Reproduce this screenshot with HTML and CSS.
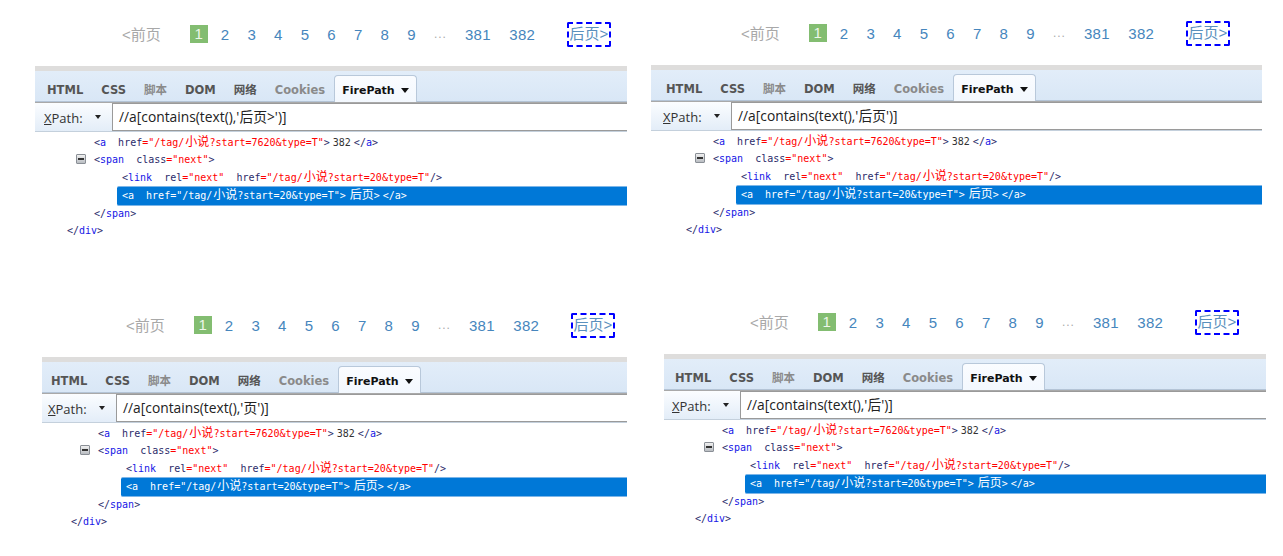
FILE: index.html
```html
<!DOCTYPE html>
<html lang="zh">
<head>
<meta charset="utf-8">
<title>FirePath XPath</title>
<link rel="stylesheet" href="styles.css">
</head>
<body>
<section class="shot shot-a">
  <nav class="pager"><span class="prev">&lt;前页</span><span class="cur">1</span><a>2</a><a>3</a><a>4</a><a>5</a><a>6</a><a>7</a><a>8</a><a>9</a><span class="dots">...</span><a class="big">381</a><a class="big">382</a><a class="next">后页&gt;</a></nav>
  <div class="grey"></div>
  <div class="tabs"><b>HTML</b><b>CSS</b><b class="off">脚本</b><b>DOM</b><b>网络</b><b class="off">Cookies</b><b class="tab">FirePath<i class="caret"></i></b></div>
  <div class="tools"><label><u>X</u>Path:</label><i class="drop"></i><div class="input">//a[contains(text(),'后页&gt;')]</div></div>
  <div class="code">
    <div class="row l1"><s>&lt;</s><em>a</em>  <s>href</s><q>="/tag/<span class="c">小说</span>?start=7620&amp;type=T"</q><s>&gt;</s><span class="t">382</span><s>&lt;/</s><em>a</em><s>&gt;</s></div>
    <div class="row l1"><i class="minus"></i><s>&lt;</s><em>span</em>  <s>class</s><q>="next"</q><s>&gt;</s></div>
    <div class="row l2"><s>&lt;</s><em>link</em>  <s>rel</s><q>="next"</q>  <s>href</s><q>="/tag/<span class="c">小说</span>?start=20&amp;type=T"</q><s>/&gt;</s></div>
    <div class="row l2 sel">&lt;a  href="/tag/<span class="c">小说</span>?start=20&amp;type=T"&gt;<span class="c lbl">后页</span>&gt;<span class="end">&lt;/a&gt;</span></div>
    <div class="row l1"><s>&lt;/</s><em>span</em><s>&gt;</s></div>
    <div class="row l0"><s>&lt;/</s><em>div</em><s>&gt;</s></div>
  </div>
</section>
<section class="shot shot-b">
  <nav class="pager"><span class="prev">&lt;前页</span><span class="cur">1</span><a>2</a><a>3</a><a>4</a><a>5</a><a>6</a><a>7</a><a>8</a><a>9</a><span class="dots">...</span><a class="big">381</a><a class="big">382</a><a class="next">后页&gt;</a></nav>
  <div class="grey"></div>
  <div class="tabs"><b>HTML</b><b>CSS</b><b class="off">脚本</b><b>DOM</b><b>网络</b><b class="off">Cookies</b><b class="tab">FirePath<i class="caret"></i></b></div>
  <div class="tools"><label><u>X</u>Path:</label><i class="drop"></i><div class="input">//a[contains(text(),'后页')]</div></div>
  <div class="code">
    <div class="row l1"><s>&lt;</s><em>a</em>  <s>href</s><q>="/tag/<span class="c">小说</span>?start=7620&amp;type=T"</q><s>&gt;</s><span class="t">382</span><s>&lt;/</s><em>a</em><s>&gt;</s></div>
    <div class="row l1"><i class="minus"></i><s>&lt;</s><em>span</em>  <s>class</s><q>="next"</q><s>&gt;</s></div>
    <div class="row l2"><s>&lt;</s><em>link</em>  <s>rel</s><q>="next"</q>  <s>href</s><q>="/tag/<span class="c">小说</span>?start=20&amp;type=T"</q><s>/&gt;</s></div>
    <div class="row l2 sel">&lt;a  href="/tag/<span class="c">小说</span>?start=20&amp;type=T"&gt;<span class="c lbl">后页</span>&gt;<span class="end">&lt;/a&gt;</span></div>
    <div class="row l1"><s>&lt;/</s><em>span</em><s>&gt;</s></div>
    <div class="row l0"><s>&lt;/</s><em>div</em><s>&gt;</s></div>
  </div>
</section>
<section class="shot shot-c">
  <nav class="pager"><span class="prev">&lt;前页</span><span class="cur">1</span><a>2</a><a>3</a><a>4</a><a>5</a><a>6</a><a>7</a><a>8</a><a>9</a><span class="dots">...</span><a class="big">381</a><a class="big">382</a><a class="next">后页&gt;</a></nav>
  <div class="grey"></div>
  <div class="tabs"><b>HTML</b><b>CSS</b><b class="off">脚本</b><b>DOM</b><b>网络</b><b class="off">Cookies</b><b class="tab">FirePath<i class="caret"></i></b></div>
  <div class="tools"><label><u>X</u>Path:</label><i class="drop"></i><div class="input">//a[contains(text(),'页')]</div></div>
  <div class="code">
    <div class="row l1"><s>&lt;</s><em>a</em>  <s>href</s><q>="/tag/<span class="c">小说</span>?start=7620&amp;type=T"</q><s>&gt;</s><span class="t">382</span><s>&lt;/</s><em>a</em><s>&gt;</s></div>
    <div class="row l1"><i class="minus"></i><s>&lt;</s><em>span</em>  <s>class</s><q>="next"</q><s>&gt;</s></div>
    <div class="row l2"><s>&lt;</s><em>link</em>  <s>rel</s><q>="next"</q>  <s>href</s><q>="/tag/<span class="c">小说</span>?start=20&amp;type=T"</q><s>/&gt;</s></div>
    <div class="row l2 sel">&lt;a  href="/tag/<span class="c">小说</span>?start=20&amp;type=T"&gt;<span class="c lbl">后页</span>&gt;<span class="end">&lt;/a&gt;</span></div>
    <div class="row l1"><s>&lt;/</s><em>span</em><s>&gt;</s></div>
    <div class="row l0"><s>&lt;/</s><em>div</em><s>&gt;</s></div>
  </div>
</section>
<section class="shot shot-d">
  <nav class="pager"><span class="prev">&lt;前页</span><span class="cur">1</span><a>2</a><a>3</a><a>4</a><a>5</a><a>6</a><a>7</a><a>8</a><a>9</a><span class="dots">...</span><a class="big">381</a><a class="big">382</a><a class="next">后页&gt;</a></nav>
  <div class="grey"></div>
  <div class="tabs"><b>HTML</b><b>CSS</b><b class="off">脚本</b><b>DOM</b><b>网络</b><b class="off">Cookies</b><b class="tab">FirePath<i class="caret"></i></b></div>
  <div class="tools"><label><u>X</u>Path:</label><i class="drop"></i><div class="input">//a[contains(text(),'后')]</div></div>
  <div class="code">
    <div class="row l1"><s>&lt;</s><em>a</em>  <s>href</s><q>="/tag/<span class="c">小说</span>?start=7620&amp;type=T"</q><s>&gt;</s><span class="t">382</span><s>&lt;/</s><em>a</em><s>&gt;</s></div>
    <div class="row l1"><i class="minus"></i><s>&lt;</s><em>span</em>  <s>class</s><q>="next"</q><s>&gt;</s></div>
    <div class="row l2"><s>&lt;</s><em>link</em>  <s>rel</s><q>="next"</q>  <s>href</s><q>="/tag/<span class="c">小说</span>?start=20&amp;type=T"</q><s>/&gt;</s></div>
    <div class="row l2 sel">&lt;a  href="/tag/<span class="c">小说</span>?start=20&amp;type=T"&gt;<span class="c lbl">后页</span>&gt;<span class="end">&lt;/a&gt;</span></div>
    <div class="row l1"><s>&lt;/</s><em>span</em><s>&gt;</s></div>
    <div class="row l0"><s>&lt;/</s><em>div</em><s>&gt;</s></div>
  </div>
</section>
</body>
</html>
```

FILE: styles.css
```css
* { box-sizing: border-box; }
html, body { margin: 0; height: 100%; background: #fff; overflow: hidden; }
body { position: relative; font-family: "Liberation Sans", "Noto Sans CJK SC", sans-serif; }

.shot { position: absolute; --shift: 0px; }
.shot-a { left: 35px; top: 0; width: 592px; }
.shot-b { left: 651px; top: -1px; width: 611px; --shift: 3px; }
.shot-c { left: 42px; top: 291px; width: 585px; --shift: -3px; }
.shot-d { left: 664px; top: 288px; width: 602px; --shift: -1px; }

.pager { height: 66px; display: flex; align-items: center; padding: 2px 0 0 calc(87px + var(--shift)); font-size: 15px; color: #4686bd; }
.prev { color: #a8a8a8; margin: -2px 29px 0 0; }
.cur { width: 18px; height: 18px; margin-right: 13px; background: #83bd71; color: #eef6ea; text-align: center; line-height: 18px; }
.pager a { margin-right: 18.3px; }
.pager a.big { letter-spacing: .3px; margin-right: 18.5px; }
.dots { color: #aaa; font-size: 12px; margin-right: 19px; letter-spacing: 1px; width: 12px; }
.pager a.next { margin: 0 0 0 13px; width: 44px; height: 25px; border: 2px dashed #00f; border-radius: 2px; line-height: 20px; white-space: nowrap; text-align: center; color: #5a90bd; }

.grey { height: 5px; background: #dedddc; }

.tabs { height: 31px; display: flex; align-items: flex-end; padding-left: calc(12px + var(--shift)); background: linear-gradient(#e2edf9, #d9e7f6); border-bottom: 1px solid #b4c4d6; font-family: "DejaVu Sans", "Noto Sans CJK SC", sans-serif; font-size: 11.5px; }
.tabs b { margin-right: 18px; line-height: 22px; color: #555; }
.tabs b.off { color: #8a8a8a; }
.tabs b.tab { margin: 0 0 -1px -9px; width: 83px; height: 27px; line-height: 26px; padding: 3px 0 0 7px; color: #111; font-size: 11px; background: linear-gradient(#fafcff, #f3f8fe); border: 1px solid #b8c8da; border-bottom: 0; border-radius: 4px 4px 0 0; display: flex; align-items: center; gap: 6px; }
.caret { margin-top: -1px; border: 4.5px solid transparent; border-top: 5px solid #111; border-bottom: 0; }

.tools { height: 30px; display: flex; align-items: center; padding-left: calc(9px + var(--shift)); background: linear-gradient(#fbfdff, #e3edf8); border-top: 1px solid #a9a9a9; border-bottom: 1px solid #c4d0dc; font-family: "Open Sans", "Noto Sans CJK SC", sans-serif; font-size: 13px; color: #333; }
.tools label { width: 51px; padding-top: 2px; }
.drop { width: 0; margin-right: 10px; border: 3.5px solid transparent; border-top: 4px solid #222; border-bottom: 0; }
.input { flex: 1; height: 28px; margin-left: 1px; padding-left: 6px; line-height: 25px; background: #fff; border: 1px solid #9a9a9a; border-right: 0; color: #222; font-size: 13.8px; white-space: nowrap; }

.code { padding-top: 1.6px; font-family: "DejaVu Sans Mono", "Noto Sans CJK SC", monospace; font-size: 10px; }
.row { height: 17.7px; line-height: 17.7px; white-space: pre; color: #333; }
.row s { text-decoration: none; color: #2b2b6a; }
.row em { font-style: normal; color: #1515e6; }
.row q { quotes: none; color: #f00; }
.row q::before, .row q::after { content: none; }
.t { margin: 0 3px 0 3px; }
.c { font-size: 12px; line-height: 0; margin-left: 1px; font-family: "Noto Sans CJK SC", sans-serif; }
.lbl { margin-left: 4px; }
.end { margin-left: 3px; }
.l0 { padding-left: calc(32px + var(--shift)); }
.l1 { padding-left: calc(59px + var(--shift)); }
.l2 { padding-left: calc(87px + var(--shift)); }
.minus { position: relative; display: inline-block; vertical-align: -1px; width: 10px; height: 10px; margin-left: -18px; margin-right: 8px; border: 1px solid #8a8f96; border-radius: 1px; background: linear-gradient(#f0f0f0, #b9bdc2); }
.minus::after { content: ""; position: absolute; left: 1px; right: 1px; top: 3px; height: 2px; background: #333; }
.row.sel { height: 20px; line-height: 18px; margin: -1px 0; margin-left: calc(82px + var(--shift)); padding-left: 5px; color: #fff; background: #0078d7; border-top: 1px solid #7db6e8; border-bottom: 1px solid #7db6e8; border-radius: 2px 0 0 2px; }
```
